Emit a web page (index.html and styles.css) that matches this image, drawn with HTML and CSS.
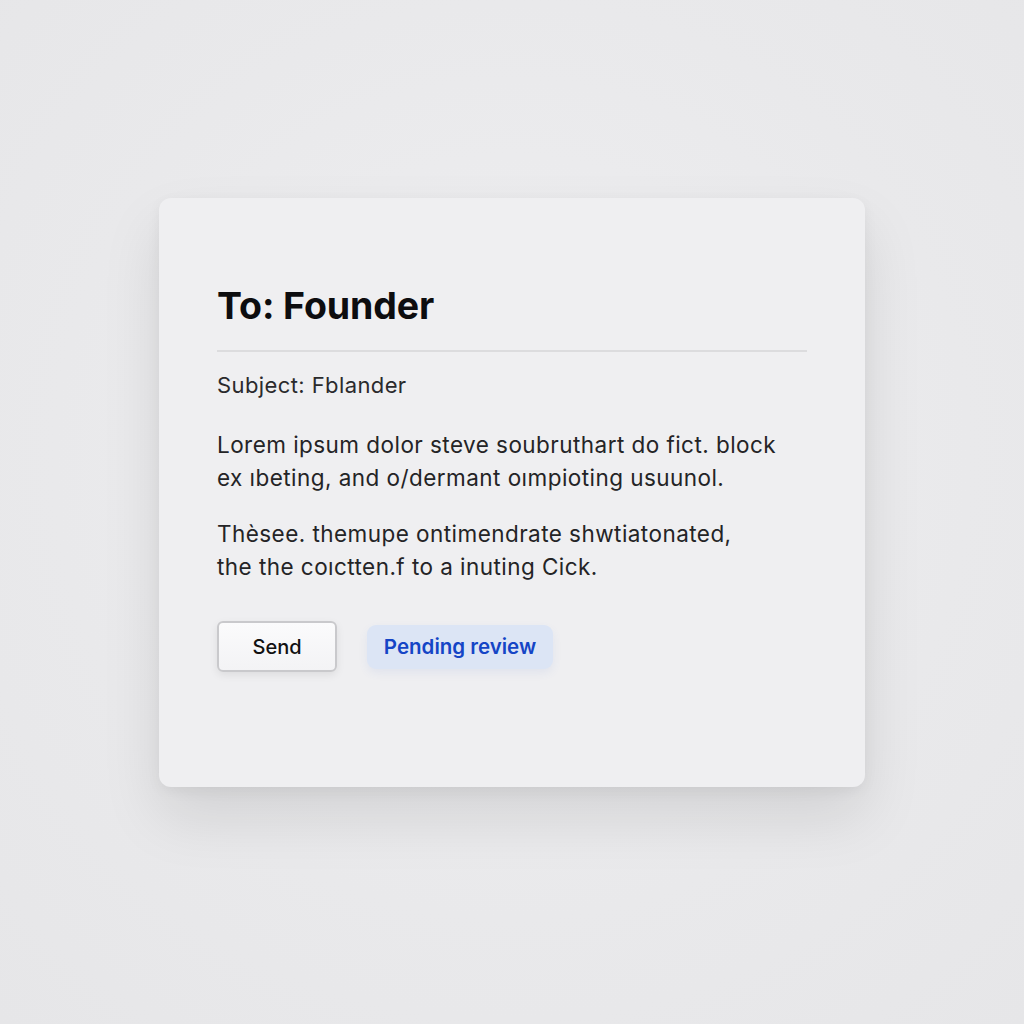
FILE: index.html
```html
<!DOCTYPE html>
<html lang="en">
<head>
  <meta charset="UTF-8">
  <meta name="viewport" content="width=device-width, initial-scale=1.0">
  <title>To: Founder</title>
  <link rel="stylesheet" href="styles.css">
</head>
<body>
  <!-- message card -->
  <div class="card">
    <h1 class="to">To: Founder</h1>
    <div class="rule"></div>
    <p class="subject">Subject: Fblander</p>

    <p class="body-text">Lorem ipsum dolor steve soubruthart do fict. block<br>ex ıbeting, and o/dermant oımpioting usuunol.</p>
    <p class="body-text">Thèsee. themupe ontimendrate shwtiatonated,<br>the the coıctten.f to a inuting Cick.</p>

    <div class="actions">
      <button class="send">Send</button>
      <span class="status">Pending review</span>
    </div>
  </div>
</body>
</html>
```

FILE: styles.css
```css
body {
  margin: 0;
  height: 1024px;
  background: radial-gradient(circle at 50% 45%, #efeff1 0%, #e9e9eb 60%, #e6e6e8 100%);
  font-family: 'Inter', 'Liberation Sans', sans-serif;
  color: #1c1c1e;
  padding-top: 198px;
  box-sizing: border-box;
}

.card {
  width: 706px;
  height: 589px;
  margin: 0 0 0 159px;
  box-sizing: border-box;
  padding: 86px 58px 0 58px;
  background: #efeff1;
  border-radius: 12px;
  box-shadow: 0 30px 60px rgba(0, 0, 0, 0.10), 0 4px 14px rgba(0, 0, 0, 0.05);
}

.to {
  margin: 0;
  font-size: 37.5px;
  line-height: 44px;
  font-weight: 700;
  color: #0d0d0f;
  letter-spacing: -0.1px;
}

.rule {
  height: 2px;
  background: #dcdcde;
  margin-top: 22px;
}

.subject {
  margin: 19px 0 0;
  font-size: 22px;
  line-height: 28px;
  letter-spacing: 0.4px;
  color: #2a2a2c;
}

.body-text {
  margin: 29px 0 0;
  font-size: 22.5px;
  line-height: 33px;
  letter-spacing: 0.45px;
  color: #242426;
}

.body-text + .body-text {
  margin-top: 23px;
}

.actions {
  display: flex;
  align-items: center;
  gap: 30px;
  margin-top: 38px;
}

.send {
  width: 120px;
  height: 51px;
  font-family: inherit;
  font-size: 20px;
  font-weight: 500;
  color: #111;
  background: linear-gradient(#fbfbfc, #f3f3f5);
  border: 2px solid #c9c9cc;
  border-radius: 6px;
  box-shadow: 0 3px 8px rgba(0, 0, 0, 0.08);
}

.status {
  display: inline-flex;
  align-items: center;
  justify-content: center;
  width: 186px;
  height: 44px;
  border-radius: 9px;
  background: #dce5f5;
  color: #1545c6;
  font-size: 20.5px;
  font-weight: 600;
  box-shadow: 0 4px 10px rgba(60, 100, 200, 0.08);
}
```
